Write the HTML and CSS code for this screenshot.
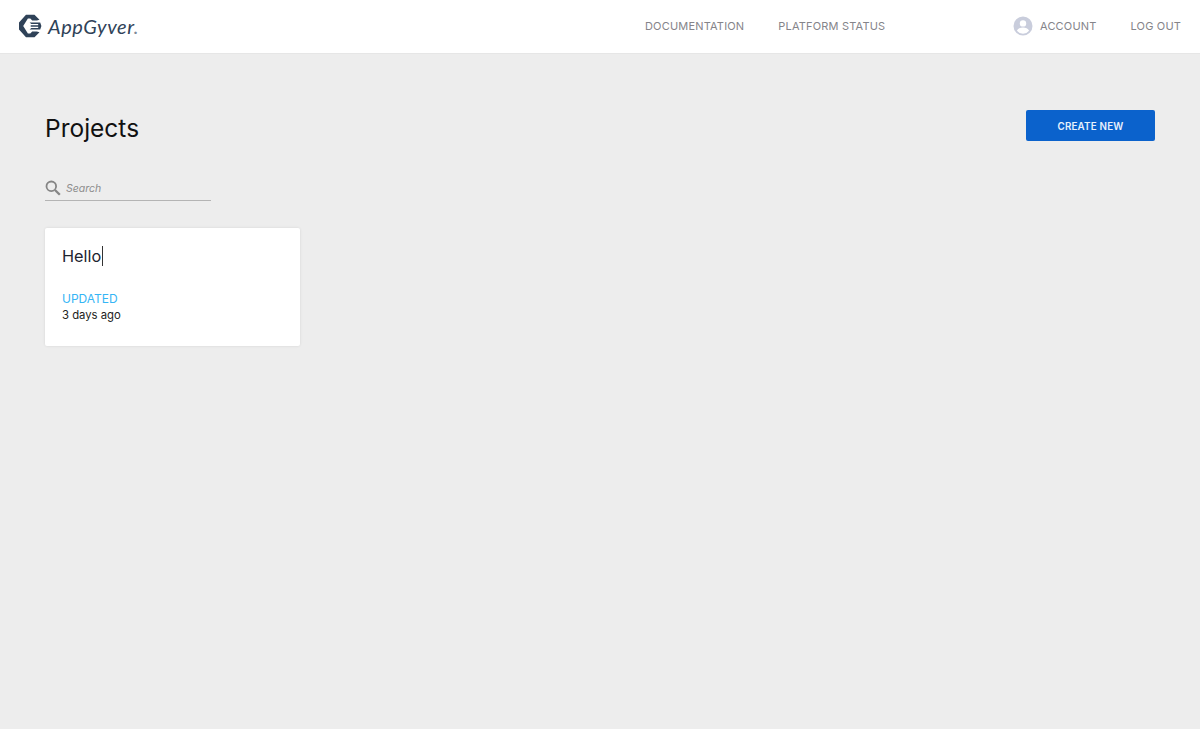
FILE: index.html
```html
<!DOCTYPE html>
<html lang="en">
<head>
<meta charset="utf-8">
<title>Projects</title>
<link rel="stylesheet" href="styles.css">
</head>
<body>
<header class="topbar">
  <a class="brand" href="#">
    <svg class="brand-mark" viewBox="0 0 24 24" width="24" height="24" aria-hidden="true">
      <path fill="#2f4258" d="M8 .8h8.500l5 5-2.700.8h-4.600l-1.900-2.100h-2.400L5.200 12l4.700 7.500h2.400l1.900-2.100h4.600l2.700.8-5 5H8L1 15.500v-7z"/>
      <path fill="#2f4258" d="M11.600 8.400h10.600l1.200 3.600-1.200 3.600H11.600l1.700-1.500h6.900v-1.300h-7.100l-.8-.8.800-.8h7.100V9.900h-6.900z"/>
    </svg>
    <span class="brand-name">AppGyver<span class="brand-dot">.</span></span>
  </a>
  <nav class="nav-main">
    <a href="#">DOCUMENTATION</a>
    <a href="#">PLATFORM STATUS</a>
  </nav>
  <nav class="nav-user">
    <a class="account" href="#">
      <svg viewBox="0 0 20 20" width="20" height="20" aria-hidden="true">
        <circle cx="10" cy="10" r="9.500" fill="#c9cddc"/>
        <circle cx="10" cy="7.400" r="3.200" fill="#fff"/>
        <path fill="#fff" d="M3.900 14.800c1-2.200 3.400-3.300 6.100-3.300s5.100 1.100 6.100 3.300A7.800 7.800 0 0 1 10 17.800a7.800 7.800 0 0 1-6.100-3z"/>
      </svg>
      ACCOUNT
    </a>
    <a href="#">LOG OUT</a>
  </nav>
</header>
<main class="content">
  <div class="page-head">
    <h1>Projects</h1>
    <button class="create" type="button">CREATE NEW</button>
  </div>
  <label class="search">
    <svg viewBox="0 0 16 16" width="16" height="16" aria-hidden="true">
      <circle cx="6.300" cy="6.300" r="4.800" fill="none" stroke="#858585" stroke-width="1.800"/>
      <path d="M10 10l4.800 4.800" stroke="#858585" stroke-width="2.300" fill="none"/>
    </svg>
    <input type="text" placeholder="Search">
  </label>
  <article class="card">
    <h2><span class="title">Hello</span><span class="caret"></span></h2>
    <div class="label">UPDATED</div>
    <div class="when">3 days ago</div>
  </article>
</main>
</body>
</html>
```
FILE: styles.css
```css
* { box-sizing: border-box; }
html, body { margin: 0; height: 100%; }
body {
  background: #ededed;
  font-family: Inter, "Liberation Sans", sans-serif;
  color: #111;
  overflow: hidden;
}
a { text-decoration: none; color: inherit; white-space: nowrap; }
.topbar {
  height: 54px;
  background: #fff;
  border-bottom: 1px solid #e6e6e6;
  display: flex;
  align-items: center;
  padding: 0 19px 2px 18px;
}
.brand { display: flex; align-items: center; gap: 6px; width: 627px; flex: none; }
.brand-name {
  font-family: Lato, sans-serif;
  font-style: italic;
  font-size: 20px;
  color: #2f4258;
  letter-spacing: .55px;
}
.brand-dot { color: #7d8a99; }
.nav-main, .nav-user {
  display: flex;
  align-items: center;
  font-size: 11px;
  color: #85848a;
  letter-spacing: .18px;
}
.nav-main { gap: 34px; width: 368px; flex: none; }
.nav-user { gap: 34px; flex: none; }
.account { display: flex; align-items: center; gap: 7px; }
.content { padding: 56px 45px 0; }
.page-head { display: flex; justify-content: space-between; align-items: flex-start; }
h1 {
  margin: 0;
  font-size: 24.500px;
  line-height: 36px;
  font-weight: 400;
  color: #111;
}
.create {
  width: 129px;
  height: 31px;
  padding: 1px 0 0;
  background: #0b62cc;
  border: 0;
  border-radius: 2px;
  color: #e8f1fc;
  font: 600 9.800px Inter, "Liberation Sans", sans-serif;
  letter-spacing: .2px;
}
.search {
  display: flex;
  align-items: center;
  gap: 5px;
  width: 166px;
  height: 28px;
  margin-top: 27px;
  padding-top: 2px;
  border-bottom: 1px solid #b4b4b4;
}
.search input {
  flex: 1;
  min-width: 0;
  border: 0;
  padding: 1px 0 0;
  background: transparent;
  font: italic 10.500px Inter, "Liberation Sans", sans-serif;
  outline: 0;
}
.search input::placeholder { color: #8e8e8e; opacity: 1; }
.card {
  width: 255px;
  height: 118px;
  margin-top: 27px;
  padding: 17px 17px;
  background: #fff;
  border-radius: 2px;
  box-shadow: 0 0 3px rgba(0, 0, 0, .1);
}
h2 {
  margin: 0 0 24px;
  display: flex;
  align-items: center;
  height: 22px;
  font-size: 16.300px;
  font-weight: 400;
  color: #1d2430;
}
.caret { width: 1px; height: 20px; background: #333; margin-left: 1px; }
.label { font-size: 12px; line-height: 16px; color: #35b5f5; }
.when { font-size: 11.300px; line-height: 16px; color: #222; }
```
